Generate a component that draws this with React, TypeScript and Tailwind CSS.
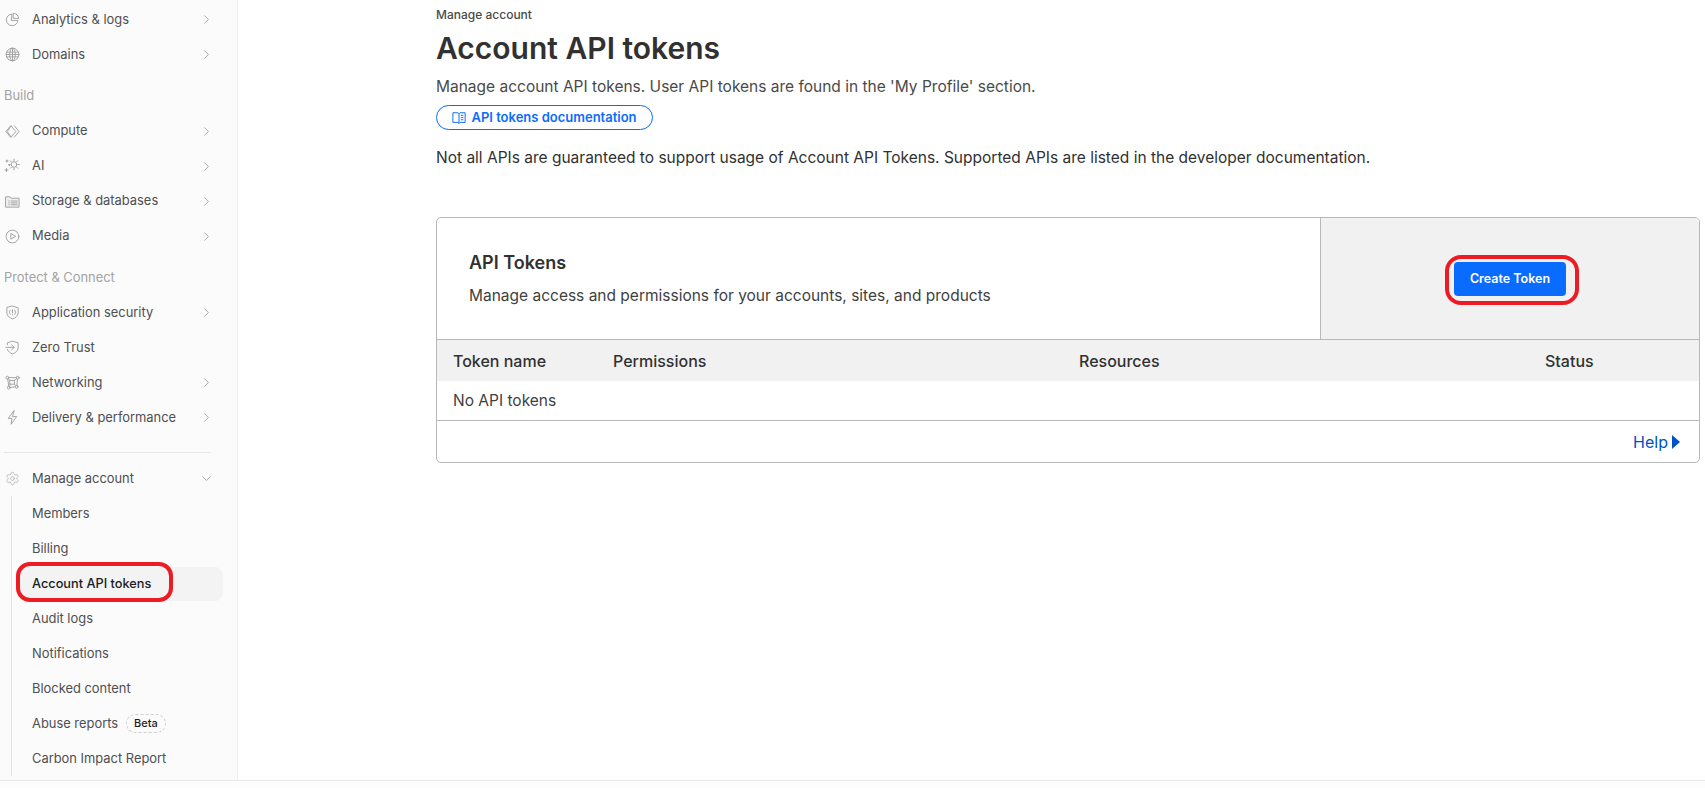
import type { ReactNode } from "react"
import { ChevronDown, ChevronRight, Settings } from "lucide-react"

const FONT = "font-['Inter','Liberation_Sans',sans-serif]"

const Icon = ({ children }: { children: ReactNode }) => (
  <svg viewBox="0 0 16 16" className="w-[15px] h-[15px] text-[#a0a0a0]" fill="none" stroke="currentColor" strokeWidth={1} strokeLinecap="round" strokeLinejoin="round">
    {children}
  </svg>
)

const PieIcon = () => (
  <Icon>
    <path d="M7 2.200A6.200 6.200 0 1 0 13.800 9H7z" />
    <path d="M9.200 1.400a5.600 5.600 0 0 1 5.400 5.400H9.200z" />
  </Icon>
)
const GlobeIcon = () => (
  <Icon>
    <circle cx="8" cy="8" r="6.800" />
    <ellipse cx="8" cy="8" rx="3" ry="6.800" />
    <path d="M8 1.200v13.600M1.800 5.500h12.400M1.200 8h13.600M1.800 10.500h12.400" />
  </Icon>
)
const ComputeIcon = () => (
  <Icon>
    <path d="M5.500 2.500 1 8l4.500 5.500" />
    <path d="M10 2 15 8l-5 6" />
    <path d="M6.500 2 11.500 8l-5 6" />
    <path d="M6.500 2 2.500 8l4 6" />
  </Icon>
)
const AiIcon = () => (
  <svg viewBox="0 0 16 16" className="w-[16px] h-[16px] text-[#a0a0a0]" fill="none" stroke="currentColor" strokeWidth={1} strokeLinecap="round">
    <circle cx="10" cy="6.500" r="2.800" />
    <path d="M10 1.200v1.500M10 10.300v1.500M4.700 6.500h1.500M13.800 6.500h1.500M6.300 2.800l1 1M12.700 9.200l1 1M13.700 2.800l-1 1M7.300 9.200l-1 1" />
    <path d="M2 3h2M3 2v2M1 12h3M2.500 10.500v3M5 7.500h.5" />
  </svg>
)
const StorageIcon = () => (
  <Icon>
    <path d="M1 3h4.500l1 1.500H15v9.500H1z" fill="#efefef" />
    <path d="M4 7.500h.5M6.500 7.500H13M4 9.500h.5M6.500 9.500H13M4 11.500h.5M6.500 11.500H13" />
  </Icon>
)
const MediaIcon = () => (
  <Icon>
    <circle cx="8" cy="8" r="6.800" />
    <path d="M6.200 5.200v5.600L11 8z" />
  </Icon>
)
const ShieldIcon = () => (
  <Icon>
    <path d="M8 1.200 14 3v5.500c0 3-3 5.300-6 6.300-3-1-6-3.300-6-6.300V3z" />
    <path d="M5.500 5.500c-1 1.500-1 3 0 4.500M10.500 5.500c1 1.500 1 3 0 4.500M8 5v3.500M8 10.500v.3" />
  </Icon>
)
const ZeroTrustIcon = () => (
  <Icon>
    <path d="M2.500 5V3L8 1.200 14 3v5.500c0 3-3 5.300-6 6.300-2.500-.8-4.500-2.500-5.500-4.800" />
    <path d="M.8 7.800h9M7 5l2.800 2.800L7 10.600" />
  </Icon>
)
const NetworkIcon = () => (
  <Icon>
    <circle cx="2.500" cy="2.800" r="1.500" />
    <circle cx="13.500" cy="2.800" r="1.500" />
    <circle cx="4" cy="13.500" r="1.500" />
    <circle cx="12.500" cy="12.500" r="1.500" />
    <rect x="5.500" y="5.800" width="4.500" height="4" />
    <path d="M4 2.800h8M3 4.300l1 7.700M13.300 4.300l-.6 6.700M5.500 13.300l5.500-.7M3.500 3.800l2 2M12.500 3.800l-2.500 2M5 12.300l.5-2.500M11.500 11.300 10 9.800" />
  </Icon>
)
const BoltIcon = () => (
  <Icon>
    <path d="M9.500.8 3.500 9h4l-1 6.200L12.500 7h-4z" />
  </Icon>
)
const BookIcon = () => (
  <svg viewBox="0 0 16 16" className="w-[14px] h-[14px] text-[#0a6cf5]" fill="none" stroke="currentColor" strokeWidth={1.100} strokeLinejoin="round">
    <path d="M8 3.200 6.800 2H1v11h5.800L8 14.200 9.200 13H15V2H9.200zM8 3.200v11" />
    <path d="M10 5h3M10 7.500h3M10 10h3" />
  </svg>
)

const NavItem = ({ icon, label, open, more = true }: { icon: ReactNode; label: string; open?: boolean; more?: boolean }) => (
  <div className="flex items-center h-[35px] text-[12.900px] text-[#4f4f52]">
    <span className="w-[24px] mr-[8px] flex justify-center shrink-0">{icon}</span>
    <span className="flex-1">{label}</span>
    {more && (open
      ? <ChevronDown className="w-[15px] h-[15px] mr-[23px] text-[#8f8f8f]" strokeWidth={1.200} />
      : <ChevronRight className="w-[15px] h-[15px] mr-[23px] text-[#8f8f8f]" strokeWidth={1.200} />)}
  </div>
)

const SectionLabel = ({ label }: { label: string }) => (
  <div className="h-[41.500px] flex items-end pb-[8px] pl-[4px] text-[12.900px] text-[#a3a3a3]">{label}</div>
)

const SubItem = ({ children }: { children: ReactNode }) => (
  <div className="flex items-center h-[35px] pl-[20px] text-[12.900px] text-[#4f4f52]">{children}</div>
)

const Sidebar = () => (
  <aside className="w-[238px] shrink-0 bg-[#fbfbfb] border-r border-[#ececec] pt-[2px] overflow-hidden">
    <NavItem icon={<PieIcon />} label="Analytics & logs" />
    <NavItem icon={<GlobeIcon />} label="Domains" />
    <SectionLabel label="Build" />
    <NavItem icon={<ComputeIcon />} label="Compute" />
    <NavItem icon={<AiIcon />} label="AI" />
    <NavItem icon={<StorageIcon />} label="Storage & databases" />
    <NavItem icon={<MediaIcon />} label="Media" />
    <SectionLabel label="Protect & Connect" />
    <NavItem icon={<ShieldIcon />} label="Application security" />
    <NavItem icon={<ZeroTrustIcon />} label="Zero Trust" more={false} />
    <NavItem icon={<NetworkIcon />} label="Networking" />
    <NavItem icon={<BoltIcon />} label="Delivery & performance" />
    <div className="mx-[4px] w-[207px] border-t border-[#e6e6e6] mt-[17px] mb-[8px]" />
    <NavItem icon={<Settings className="w-[15px] h-[15px] text-[#a0a0a0]" strokeWidth={1} />} label="Manage account" open />
    <div className="ml-[11px] border-l border-[#e4e4e4]">
      <SubItem>Members</SubItem>
      <SubItem>Billing</SubItem>
      <div className="relative h-[35px] flex items-center">
        <div className="ml-[8px] w-[203px] h-[34px] flex items-center pl-[12px] rounded-[8px] bg-[#f3f3f3] text-[12.750px] font-medium text-[#1d1d1f]">Account API tokens</div>
        <div className="absolute left-[4px] top-[-4px] w-[157px] h-[40px] rounded-[14px] border-[4px] border-[#ed1c24]" />
      </div>
      <SubItem>Audit logs</SubItem>
      <SubItem>Notifications</SubItem>
      <SubItem>Blocked content</SubItem>
      <SubItem>
        Abuse reports
        <span className="ml-[8px] h-[19px] px-[7px] flex items-center rounded-full border border-dashed border-[#cfcfcf] text-[11px] font-medium text-[#1d1d1f]">Beta</span>
      </SubItem>
      <SubItem>Carbon Impact Report</SubItem>
    </div>
  </aside>
)

const TokensCard = () => (
  <div className="mt-[47px] w-[1264px] rounded-[5px] border border-[#b8b8b8] overflow-hidden">
    <div className="flex h-[122px] border-b border-[#b8b8b8]">
      <div className="flex-1 pl-[32px] pt-[31px]">
        <h2 className="text-[18px] leading-[28px] font-semibold text-[#313131]">API Tokens</h2>
        <p className="mt-[7px] text-[15.500px] leading-[24px] text-[#3f3f3f]">Manage access and permissions for your accounts, sites, and products</p>
      </div>
      <div className="relative w-[379px] bg-[#f1f1f1] border-l border-[#b8b8b8] flex items-center justify-center">
        <button className="w-[112px] h-[34px] pt-px rounded-[4px] bg-[#0a6cff] text-white text-[12.500px] font-semibold">Create Token</button>
        <div className="absolute left-[124px] top-[37px] w-[134px] h-[50px] rounded-[16px] border-[4px] border-[#ed1c24]" />
      </div>
    </div>
    <div className="grid grid-cols-[160px_466px_466px_1fr] h-[41px] items-center bg-[#f1f1f1] text-[16px] font-medium text-[#313131]">
      <span className="pl-[16px]">Token name</span>
      <span className="pl-[16px]">Permissions</span>
      <span className="pl-[16px]">Resources</span>
      <span className="pl-[16px]">Status</span>
    </div>
    <div className="h-[40px] flex items-center pl-[16px] text-[15.500px] text-[#3f3f3f] border-b border-[#b8b8b8]">No API tokens</div>
    <div className="h-[41px] flex items-center justify-end pr-[19px] text-[16px] text-[#0051c3]">
      Help
      <svg viewBox="0 0 8 14" className="w-[8px] h-[14px] ml-[4px]"><path d="M0 0 8 7 0 14z" fill="#0051c3" /></svg>
    </div>
  </div>
)

export default function App() {
  return (
    <div className={`${FONT} h-[788px] overflow-hidden bg-white flex flex-col`}>
      <div className="flex h-[780px]">
        <Sidebar />
        <main className="flex-1 pl-[198px] pt-[7px]">
          <div className="text-[12px] leading-[16px] font-medium text-[#4a4a4a]">Manage account</div>
          <h1 className="mt-[5px] text-[30px] leading-[40px] font-semibold text-[#313131]">Account API tokens</h1>
          <p className="mt-[7px] text-[15.500px] leading-[24px] text-[#4a4a4a]">Manage account API tokens. User API tokens are found in the 'My Profile' section.</p>
          <a className="mt-[6px] w-[217px] h-[25px] flex items-center justify-center gap-[5px] rounded-full border border-[#0a6cff] text-[13px] font-semibold text-[#0a6cff]">
            <BookIcon />
            API tokens documentation
          </a>
          <p className="mt-[16px] text-[15.500px] leading-[24px] text-[#313131]">Not all APIs are guaranteed to support usage of Account API Tokens. Supported APIs are listed in the developer documentation.</p>
          <TokensCard />
        </main>
      </div>
      <div className="flex-1 border-t border-[#e8e8e8] bg-[#fdfdfd]" />
    </div>
  )
}
